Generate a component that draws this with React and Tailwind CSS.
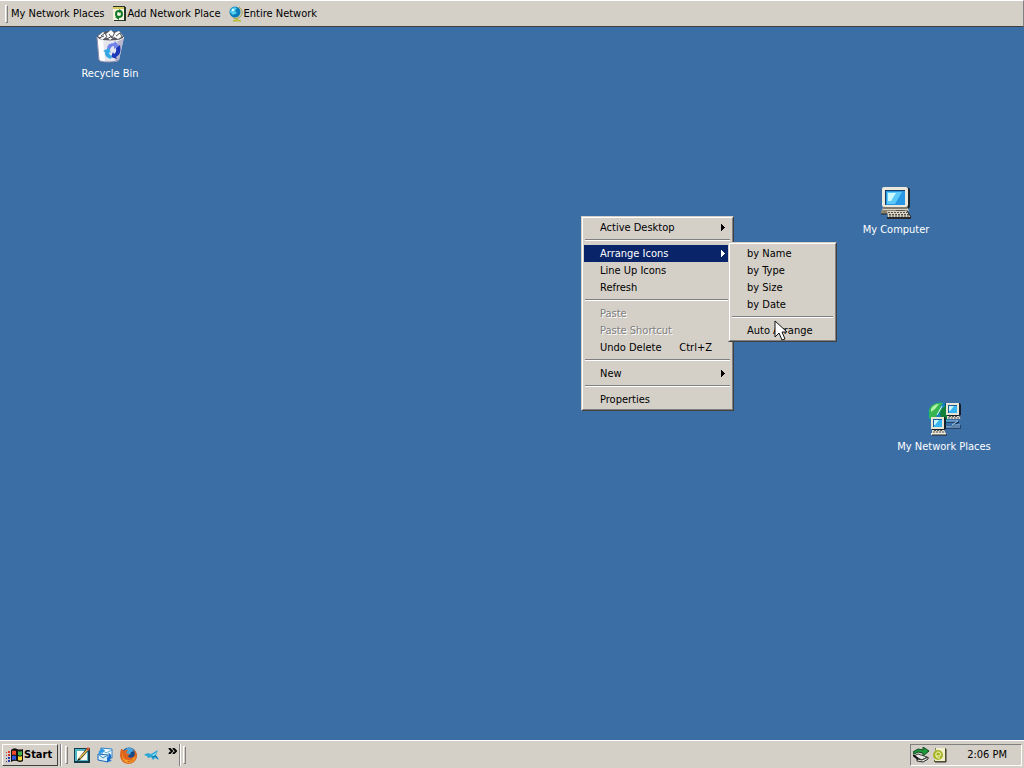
import React, { useState } from "react";
import clsx from "clsx";

const RAISED = "border border-t-white border-l-white border-r-[#404040] border-b-[#404040]";
const SUNKEN = "border border-t-[#808080] border-l-[#808080] border-r-white border-b-white";

// --- ICONS ---
function RecycleBinIcon() {
  return (
    <svg width="32" height="34" viewBox="0 0 32 34" aria-hidden="true">
      <path d="M3 8 5 31q1 2 10 2 8 0 10-2l5-23Z" fill="#e4e4ee" />
      <path d="M3 8 5 31q2 2 6 2L9 9Z" fill="#fff" />
      <path d="M24 9 21 33q4-1 4-2l5-23Z" fill="#b9b6cc" />
      <path d="M3 8Q5 3 16 2q12 0 14 6-2 4-14 4Q5 12 3 8Z" fill="#55565f" />
      <path d="m4 7 5-4 3 2 5-4 3 3 5-2 4 5-5 3-4-2-4 3-4-3-4 3Z" fill="#fafafa" />
      <path d="m7 7 4-3 2 4M15 5l3 4 3-6M22 7l4-3 2 4M5 9l5-2M13 10l5-3" fill="none" stroke="#4c4c56" />
      <path d="M3 8q1 4 13 4 12 0 14-4" fill="none" stroke="#f4f4f4" />
      <path d="M13 20q0-6 7-6l1-2 4 5-5 3v-3q-3 0-4 4Z" fill="#6f83e8" />
      <path d="M26 16q2 9-4 12l1 2-6-2 2-5 1 2q3-2 2-6Z" fill="#1b36b8" />
      <path d="M17 30q-7-2-6-7l-2-1 6-3 2 5-2-1q0 3 3 4Z" fill="#34a8e4" />
      <path d="M3 8 5 31q1 2 10 2 8 0 10-2" fill="none" stroke="#8e8aa6" />
    </svg>
  );
}

function Monitor({ x = 0, y = 0 }) {
  return (
    <g transform={`translate(${x} ${y})`}>
      <path d="M1 0h13l1 2v10l-2 1H1Z" fill="#16202c" />
      <path d="M0 0h13v12H0Z" fill="#e8e4d4" />
      <path d="M2 2h9v8H2Z" fill="#1a5c98" />
      <path d="M3 3h8v7H3Z" fill="#36b4f4" />
      <path d="M3 3h5L4 8H3Z" fill="#c5f5ff" />
      <path d="M1 13h12l2 3H1Z" fill="#ddd8c8" />
      <path d="M2 15h13M3 13.5h9" stroke="#555" strokeDasharray="2 1" />
    </g>
  );
}

function ComputerIcon() {
  return (
    <svg width="32" height="32" viewBox="0 0 32 32" aria-hidden="true">
      <path d="M5 0h22l3 2v18l-2 2H5Z" fill="#1c242c" />
      <path d="M4 0h22q2 0 2 2v16q0 2-2 2H4q-2 0-2-2V2q0-2 2-2Z" fill="#ece9dc" />
      <path d="M5 3h20v15H5Z" fill="#173d63" />
      <path d="M6 4h19v14H6Z" fill="#2696e5" />
      <path d="M7 5h15l-7 12H7Z" fill="#5ccaf8" />
      <path d="M8 6h8l-5 8H8Z" fill="#c9f8ff" />
      <path d="M3 20h24l2 4H2Z" fill="#d8d2c0" />
      <path d="M1 23h27v4H1Z" fill="#8a8374" />
      <path d="M3 21h24M16 24h9M1 27h7" stroke="#222" />
      <path d="M7 24h20l4 6H8Z" fill="#d8d3c5" />
      <path d="M8 25.500h19M9 27.500h20M9 29h21" stroke="#575248" strokeDasharray="2 1" />
      <path d="M7 31h24" stroke="#292929" strokeWidth="2" />
      <path d="m27 24 4 6" stroke="#222" />
    </svg>
  );
}

function NetworkIcon() {
  return (
    <svg width="33" height="34" viewBox="0 0 33 34" aria-hidden="true">
      <circle cx="12" cy="12" r="12" fill="#1582bd" />
      <path d="M3 4Q9-1 15 1l-3 4 3 3-6 4-2 8-6-4 0-8Z" fill="#38b553" />
      <path d="m13 8 5-5 4 6-3 9-6-2-1-4Z" fill="#147f39" />
      <path d="M3 7q3-5 8-5L7 7l-4 3Z" fill="#b4f4a6" />
      <path d="M14 4 9 13" stroke="#d6f5f5" />
      <path d="M17 2q7 4 6 12" fill="none" stroke="#083b62" strokeWidth="2" />
      <Monitor x={18} y={1} />
      <path d="M18 20h13l-7 4h9M18 26h15" fill="none" stroke="#101c38" />
      <path d="M18 19h12l-6 4h8M18 25h14" fill="none" stroke="#9bc4e8" />
      <Monitor x={3} y={15} />
      <path d="M3 31h15v2H3Z" fill="#f0eadb" />
      <path d="M4 33h15" stroke="#222" />
    </svg>
  );
}

function AddPlaceIcon() {
  return (
    <svg width="15" height="16" viewBox="0 0 15 16" aria-hidden="true">
      <path d="M1 0h12v1h1v14H2V14H1Z" fill="#26352a" />
      <path d="M1 1h11v13H1Z" fill="#f5f5df" />
      <path d="M1 1h11v2H1Z" fill="#d9ca5a" />
      <circle cx="7" cy="8" r="3" fill="none" stroke="#137a2b" strokeWidth="2" />
      <path d="M3 11h4v3ZM7 3l3 2-3 2Z" fill="#137a2b" />
    </svg>
  );
}

function GlobeIcon() {
  return (
    <svg width="15" height="17" viewBox="0 0 15 17" aria-hidden="true">
      <path d="M10 1q6 5 1 10-3 3-7 1" fill="none" stroke="#a5a045" />
      <circle cx="6" cy="6" r="5.5" fill="#087bb8" />
      <path d="M2 3q3-3 6-1L6 5l2 2-4 2-3-3Z" fill="#54cff1" />
      <path d="M3 3h2v2H3Z" fill="#e4ffff" />
      <path d="M7 12v2M4 15q4-3 8 0Z" fill="#d9e345" stroke="#b4b83a" />
    </svg>
  );
}

function WindowsFlag() {
  return (
    <svg width="17" height="15" viewBox="0 0 17 15" aria-hidden="true">
      <path d="M5 2q3-3 6-1 3 1 6 0v12q-3 2-6 0-3-1-6 1Z" fill="#111" />
      <path d="M6 3q2-1 4 0v4q-2-1-4 0Z" fill="#f04a2b" />
      <path d="M12 3q2 1 4 0v4q-2 1-4 0Z" fill="#41b548" />
      <path d="M6 8q2-1 4 0v4q-2-1-4 0Z" fill="#3157de" />
      <path d="M12 8q2 1 4 0v4q-2 1-4 0Z" fill="#f5d83a" />
      <path d="M2 3h2v2H2ZM0 4h1v1H0ZM2 6h2v2H2ZM0 7h1v1H0Z" fill="#d73a2b" />
      <path d="M2 9h2v2H2ZM0 10h1v1H0ZM2 12h2v2H2ZM0 13h1v1H0Z" fill="#263cad" />
    </svg>
  );
}

function ShowDesktopIcon() {
  return (
    <svg width="16" height="16" viewBox="0 0 16 16" aria-hidden="true">
      <path d="M0 1h16v15H0Z" fill="#163c4b" />
      <path d="M1 2h13v12H1Z" fill="#53b8c6" />
      <path d="M3 4h10v9H3Z" fill="#fffef0" />
      <path d="M4 12 3 14l3-1 8-9-2-2Z" fill="#222" />
      <path d="m5 11 1 1 8-9-1-1Z" fill="#efc44d" />
      <path d="m12 2 2-2 2 2-2 2Z" fill="#d5533d" />
    </svg>
  );
}

function MailIcon() {
  return (
    <svg width="16" height="16" viewBox="0 0 16 16" aria-hidden="true">
      <path d="m4 1 11 1v9L4 9Z" fill="#f0faff" stroke="#2f7fc0" />
      <path d="m4 2 5 4 6-3" fill="none" stroke="#55a6d1" />
      <path d="m1 7 10 1v7L1 13Z" fill="#d8f0fd" stroke="#1d68b4" />
      <path d="m1 7 5 4 5-3" fill="none" stroke="#3f8bc0" />
      <path d="M12 6q4 2 1 7l2 1-5 1v-5l1 1q2-3 0-4Z" fill="#1670d0" />
      <path d="M3 8Q0 4 4 3L3 1l5 2-3 4V5Q3 5 4 8Z" fill="#2a96e4" />
    </svg>
  );
}

function FirefoxIcon() {
  return (
    <svg width="17" height="17" viewBox="0 0 17 17" aria-hidden="true">
      <circle cx="9" cy="8" r="7.5" fill="#174a8b" />
      <path d="M7 1q5-1 7 3l-3 1-1 3-4-1-2-3Z" fill="#4ba9df" />
      <path d="M1 2q2 0 3 2 2-2 4-1L6 6l4 1-2 2q1 3 5 1 3-2 1-6l-1-2q5 4 4 8-2 7-9 7Q1 16 0 9q0-4 1-7Z" fill="#df651e" />
      <path d="M2 5q0 7 5 8 5 2 9-5-1 8-8 8Q1 15 2 5Z" fill="#f4a52c" />
      <path d="M2 12q5 5 12 0-5 6-12 0Z" fill="#b63316" />
    </svg>
  );
}

function BirdIcon() {
  return (
    <svg width="16" height="12" viewBox="0 0 16 12" aria-hidden="true">
      <path d="M0 6q3-3 7-1l7-4-2 5 3 5-4-2-2 2-2-3-3 1-1-2Z" fill="#28a4d5" />
      <path d="m4 5 4 1 5-3-3 4Z" fill="#8be4f5" />
      <path d="m8 8 4-1 2 3" fill="none" stroke="#1772aa" />
    </svg>
  );
}

function EjectHardwareIcon() {
  return (
    <svg width="17" height="16" viewBox="0 0 17 16" aria-hidden="true">
      <path d="m0 5 5-3 5 1V0l6 4-6 5V6L5 5 1 7Z" fill="#1f9a3a" stroke="#0c4920" />
      <path d="m1 9 4-2 9 3-5 3Z" fill="#e6e7e2" stroke="#3b443e" />
      <path d="m4 12 5 1 6-3v2l-5 3-6-1Z" fill="#f5f4ed" stroke="#262b27" />
      <path d="m0 8 5 4" stroke="#111" strokeWidth="2" />
    </svg>
  );
}

function ShieldIcon() {
  return (
    <svg width="16" height="17" viewBox="0 0 16 17" aria-hidden="true">
      <path d="M3 1h11v14H2v-2h1Z" fill="#67672c" />
      <path d="M4 1h9v13H3V6Z" fill="#f0efc9" />
      <circle cx="6" cy="8" r="5" fill="#a7b52b" />
      <path d="M4 9q-1-4 3-4 3 1 1 4H4q1 3 4 2" fill="none" stroke="#f4f8ae" />
      <path d="M14 2v13H3" fill="none" stroke="#333" />
    </svg>
  );
}

function Arrow() {
  return (
    <svg width="4" height="7" viewBox="0 0 4 7" fill="currentColor" shapeRendering="crispEdges" aria-hidden="true">
      <path d="M0 0h1v1h1v1h1v1h1v1H3v1H2v1H1v1H0Z" />
    </svg>
  );
}

function Cursor() {
  return (
    <svg width="13" height="21" viewBox="0 0 13 21" aria-hidden="true">
      <path d="M1 1v16l4-4 3 7 3-1-3-7h5Z" fill="#fff" stroke="#111" />
    </svg>
  );
}

// --- MENUS ---
const MAIN_MENU = [
  { label: "Active Desktop", sub: true },
  null,
  { label: "Arrange Icons", sub: true },
  { label: "Line Up Icons" },
  { label: "Refresh" },
  null,
  { label: "Paste", disabled: true },
  { label: "Paste Shortcut", disabled: true },
  { label: "Undo Delete", keys: "Ctrl+Z" },
  null,
  { label: "New", sub: true },
  null,
  { label: "Properties" },
];

const ARRANGE_MENU = [
  { label: "by Name" },
  { label: "by Type" },
  { label: "by Size" },
  { label: "by Date" },
  null,
  { label: "Auto Arrange" },
];

function Menu({ items, active, onHover, className }) {
  return (
    <ul role="menu" className={clsx("absolute bg-[#d4d0c8] border border-t-[#d4d0c8] border-l-[#d4d0c8] border-r-[#404040] border-b-[#404040]", className)}>
      <li role="none" className="border border-t-white border-l-white border-r-[#808080] border-b-[#808080] p-px">
        <ul role="none">
          {items.map((item, i) =>
            item ? (
              <li key={item.label} role="none">
                <button
                  role="menuitem"
                  disabled={item.disabled}
                  onMouseEnter={() => onHover && onHover(item.label)}
                  className={clsx(
                    "flex w-full h-[17px] items-center pl-4 pr-[6px] text-left whitespace-nowrap",
                    item.disabled && "text-[#808080] [text-shadow:1px_1px_0_#fff]",
                    active === item.label && "bg-[#0a246a] text-white"
                  )}
                >
                  <span className="flex-1">{item.label}</span>
                  {item.keys && <span className="pr-[13px]">{item.keys}</span>}
                  {item.sub && <Arrow />}
                </button>
              </li>
            ) : (
              <li key={i} role="separator" className="h-[9px] pt-[3px] px-px">
                <div className="h-[2px] border-t border-t-[#808080] border-b border-b-white" />
              </li>
            )
          )}
        </ul>
      </li>
    </ul>
  );
}

function DesktopIcon({ icon, label, className }) {
  return (
    <button className={clsx("absolute flex w-24 flex-col items-center text-white", className)}>
      {icon}
      <span className="mt-1 whitespace-nowrap">{label}</span>
    </button>
  );
}

function Grip() {
  return <div className="w-[3px] h-[18px] shrink-0 border border-t-white border-l-white border-r-[#808080] border-b-[#808080]" />;
}

function Etched() {
  return <div className="w-[2px] h-[22px] shrink-0 border-l border-l-[#808080] border-r border-r-white" />;
}

function App() {
  const [active, setActive] = useState("Arrange Icons");

  return (
    <div className="flex h-screen flex-col overflow-hidden bg-[#3b6ea5] font-['DejaVu_Sans_Condensed','DejaVu_Sans',sans-serif] text-[11px] leading-[14px] text-black cursor-default">
      <nav className="flex h-[27px] shrink-0 items-center border-t border-t-white border-b border-b-[#404040] border-r border-r-[#808080] bg-[#d4d0c8] pl-[5px] pt-px">
        <Grip />
        <button className="ml-[3px] whitespace-nowrap">My Network Places</button>
        <button className="ml-2 flex items-center whitespace-nowrap"><AddPlaceIcon />Add Network Place</button>
        <button className="ml-2 flex items-center whitespace-nowrap"><GlobeIcon />Entire Network</button>
      </nav>

      <main className="relative flex-1">
        <DesktopIcon icon={<RecycleBinIcon />} label="Recycle Bin" className="left-[62px] top-[2px]" />
        <DesktopIcon icon={<ComputerIcon />} label="My Computer" className="left-[848px] top-[160px]" />
        <DesktopIcon icon={<NetworkIcon />} label="My Network Places" className="left-[896px] top-[375px]" />

        <Menu items={MAIN_MENU} active={active} onHover={setActive} className="left-[581px] top-[189px] w-[153px]" />
        {active === "Arrange Icons" && (
          <Menu items={ARRANGE_MENU} className="left-[728px] top-[215px] w-[109px]" />
        )}
        <div className="pointer-events-none absolute left-[774px] top-[293px]"><Cursor /></div>
      </main>

      <footer className="flex h-[28px] shrink-0 items-center border-t border-t-white bg-[#d4d0c8] px-[2px] pt-px">
        <button className={clsx("flex h-[22px] w-[56px] items-center gap-px pl-[3px] font-bold", RAISED)}>
          <WindowsFlag />Start
        </button>
        <div className="ml-[2px] flex items-center gap-[3px]"><Etched /><Grip /></div>
        <div className="ml-[6px] flex items-center gap-[7px]">
          <button aria-label="Show Desktop"><ShowDesktopIcon /></button>
          <button aria-label="Outlook Express"><MailIcon /></button>
          <button aria-label="Firefox"><FirefoxIcon /></button>
          <button aria-label="Thunderbird"><BirdIcon /></button>
        </div>
        <button aria-label="More" className="ml-2 mb-2">
          <svg width="9" height="6" viewBox="0 0 9 6" fill="none" stroke="#000" strokeWidth="2" aria-hidden="true">
            <path d="m1 0 3 3-3 3M5 0l3 3-3 3" />
          </svg>
        </button>
        <div className="ml-[2px] flex items-center gap-[2px]"><Etched /><Grip /></div>
        <div className={clsx("ml-auto flex h-[22px] w-[112px] items-center gap-[2px] pl-[2px] pr-[14px]", SUNKEN)}>
          <EjectHardwareIcon />
          <ShieldIcon />
          <time className="ml-auto whitespace-nowrap">2:06 PM</time>
        </div>
      </footer>
    </div>
  );
}

export default App;
